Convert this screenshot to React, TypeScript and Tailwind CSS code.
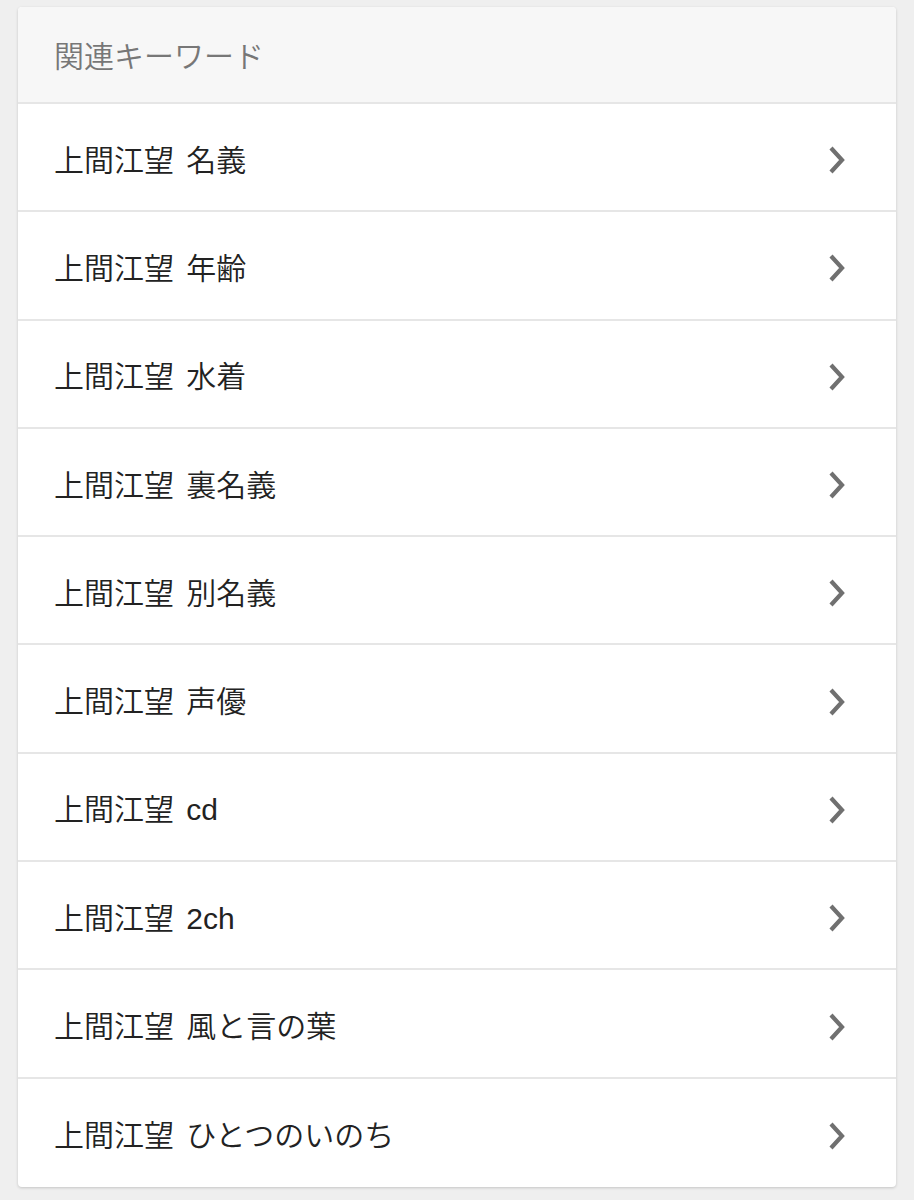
const keywords = [
  "上間江望 名義",
  "上間江望 年齢",
  "上間江望 水着",
  "上間江望 裏名義",
  "上間江望 別名義",
  "上間江望 声優",
  "上間江望 cd",
  "上間江望 2ch",
  "上間江望 風と言の葉",
  "上間江望 ひとつのいのち",
]

function Chevron() {
  return (
    <svg width="22" height="32" viewBox="0 0 22 32" fill="none" className="shrink-0">
      <path d="M5 4 L16 16 L5 28" stroke="#707070" strokeWidth="4.2" strokeLinecap="butt" strokeLinejoin="miter" />
    </svg>
  )
}

export default function App() {
  return (
    <div
      className="min-h-[1200px] w-full bg-[#efefef] pt-[7px] px-[18px]"
      style={{ fontFamily: '"Liberation Sans", "Noto Sans CJK JP", sans-serif' }}
    >
      <div className="w-[878px] overflow-hidden rounded-[4px] bg-white shadow-[0_1px_3px_rgba(0,0,0,0.18)]">
        <div className="flex h-[97px] items-center border-b-2 border-[#e6e6e6] bg-[#f7f7f7] px-[36px] pt-[4px]">
          <span className="text-[30px] font-[350] text-[#777777]">関連キーワード</span>
        </div>
        {keywords.map((kw, i) => (
          <div
            key={kw}
            className={
              i < keywords.length - 1
                ? "flex h-[108.3px] items-center justify-between border-b-2 border-[#e6e6e6] pl-[36px] pr-[48px] pt-[6px]"
                : "flex h-[108.3px] items-center justify-between pl-[36px] pr-[48px] pt-[6px]"
            }
          >
            <span className="text-[30px] font-[350] text-[#222222] [word-spacing:4px]">{kw}</span>
            <Chevron />
          </div>
        ))}
      </div>
    </div>
  )
}
